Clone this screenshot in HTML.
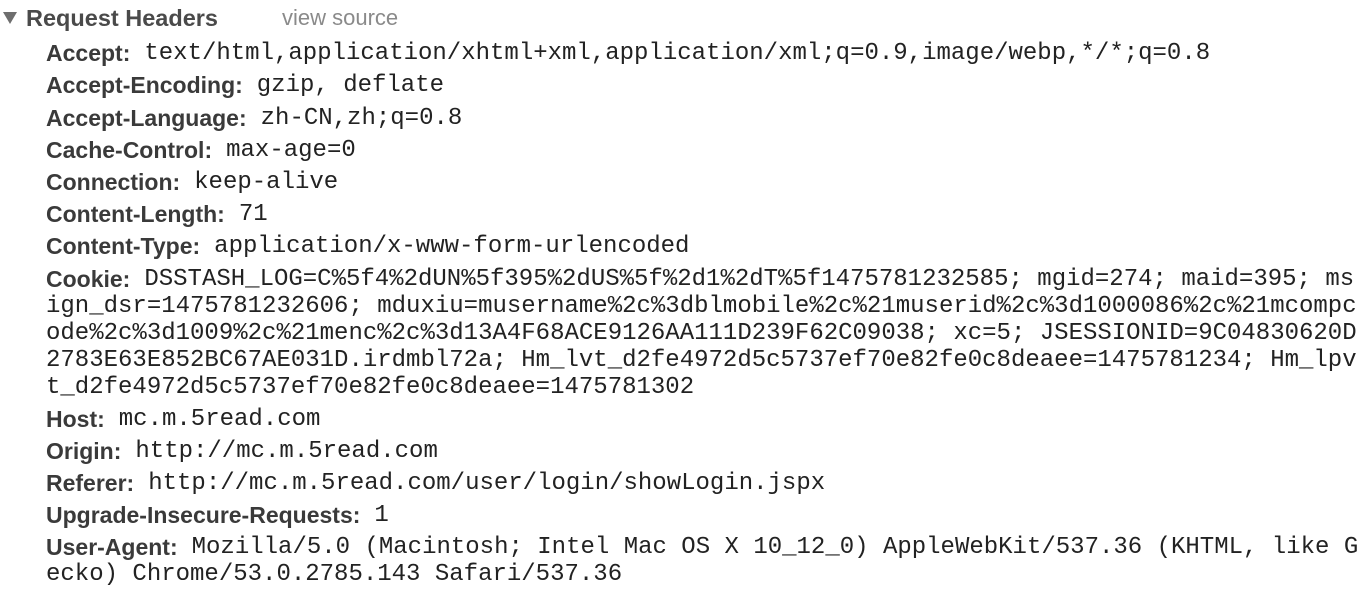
<!DOCTYPE html>
<html><head><meta charset="utf-8"><style>
html,body{margin:0;padding:0;background:#fff;width:1368px;height:596px;overflow:hidden}
.hdr{position:absolute;left:0;top:0;height:34px;font:bold 23.5px "Liberation Sans",sans-serif;color:#4a4a4a;line-height:36px}
.tri{position:absolute;left:3px;top:12px;width:0;height:0;border-left:7px solid transparent;border-right:7px solid transparent;border-top:12px solid #6e6e6e}
.hdr .t{position:absolute;left:26px;top:0;white-space:nowrap}
.hdr .vs{position:absolute;left:282px;top:0;font-weight:normal;color:#8a8a8a;white-space:nowrap;font-size:22px}
.rows{position:absolute;left:46px;top:35px;width:1330px}
.r{padding-top:5.2px;font:24px/27px "Liberation Mono",monospace;word-break:break-all;color:#222}
.k{font:bold 23px/27px "Liberation Sans",sans-serif;color:#3a3a3a;margin-right:14px;vertical-align:top}
.v{font:24px/27px "Liberation Mono",monospace;vertical-align:top}
</style></head><body>
<div class="hdr"><div class="tri"></div><span class="t">Request Headers</span><span class="vs">view source</span></div>
<div class="rows">
<div class="r"><span class="k">Accept:</span><span class="v">text/html,application/xhtml+xml,application/xml;q=0.9,image/webp,*/*;q=0.8</span></div>
<div class="r"><span class="k">Accept-Encoding:</span><span class="v">gzip, deflate</span></div>
<div class="r"><span class="k">Accept-Language:</span><span class="v">zh-CN,zh;q=0.8</span></div>
<div class="r"><span class="k">Cache-Control:</span><span class="v">max-age=0</span></div>
<div class="r"><span class="k">Connection:</span><span class="v">keep-alive</span></div>
<div class="r"><span class="k">Content-Length:</span><span class="v">71</span></div>
<div class="r"><span class="k">Content-Type:</span><span class="v">application/x-www-form-urlencoded</span></div>
<div class="r"><span class="k">Cookie:</span><span class="v">DSSTASH_LOG=C%5f4%2dUN%5f395%2dUS%5f%2d1%2dT%5f1475781232585; mgid=274; maid=395; ms<br>ign_dsr=1475781232606; mduxiu=musername%2c%3dblmobile%2c%21muserid%2c%3d1000086%2c%21mcompc<br>ode%2c%3d1009%2c%21menc%2c%3d13A4F68ACE9126AA111D239F62C09038; xc=5; JSESSIONID=9C04830620D<br>2783E63E852BC67AE031D.irdmbl72a; Hm_lvt_d2fe4972d5c5737ef70e82fe0c8deaee=1475781234; Hm_lpv<br>t_d2fe4972d5c5737ef70e82fe0c8deaee=1475781302</span></div>
<div class="r"><span class="k">Host:</span><span class="v">mc.m.5read.com</span></div>
<div class="r"><span class="k">Origin:</span><span class="v">http://mc.m.5read.com</span></div>
<div class="r"><span class="k">Referer:</span><span class="v">http://mc.m.5read.com/user/login/showLogin.jspx</span></div>
<div class="r"><span class="k">Upgrade-Insecure-Requests:</span><span class="v">1</span></div>
<div class="r"><span class="k">User-Agent:</span><span class="v">Mozilla/5.0 (Macintosh; Intel Mac OS X 10_12_0) AppleWebKit/537.36 (KHTML, like G<br>ecko) Chrome/53.0.2785.143 Safari/537.36</span></div>
</div>
</body></html>
